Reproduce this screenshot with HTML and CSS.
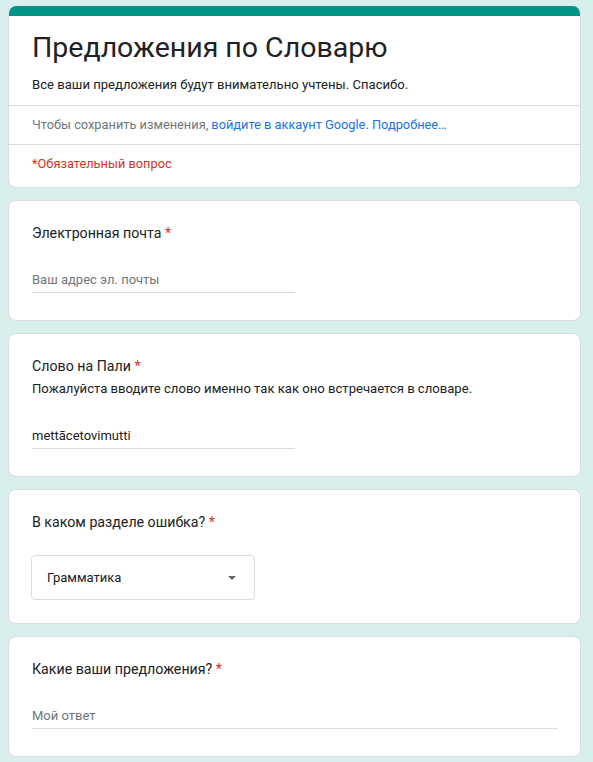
FILE: index.html
```html
<!DOCTYPE html>
<html lang="ru">
<head>
<meta charset="utf-8">
<title>Предложения по Словарю</title>
<link rel="stylesheet" href="styles.css">
</head>
<body>
<main class="form">
  <section class="card header-card">
    <div class="topbar"></div>
    <div class="header-main">
      <h1 class="title">Предложения по Словарю</h1>
      <p class="desc">Все ваши предложения будут внимательно учтены. Спасибо.</p>
    </div>
    <div class="info">Чтобы сохранить изменения, <a class="link" href="#">войдите в аккаунт Google.</a> <a class="link" href="#">Подробнее…</a></div>
    <div class="required-note">*Обязательный вопрос</div>
  </section>

  <section class="card question">
    <div class="q-title">Электронная почта <span class="star">*</span></div>
    <div class="input short"><span class="placeholder">Ваш адрес эл. почты</span></div>
  </section>

  <section class="card question">
    <div class="q-title">Слово на Пали <span class="star">*</span></div>
    <div class="q-help">Пожалуйста вводите слово именно так как оно встречается в словаре.</div>
    <div class="input short with-help"><span class="value">mettācetovimutti</span></div>
  </section>

  <section class="card question">
    <div class="q-title">В каком разделе ошибка? <span class="star">*</span></div>
    <div class="select">
      <span class="value">Грамматика</span>
      <svg class="arrow" width="8" height="4" viewBox="0 0 8 4"><path d="M0 0 L8 0 L4 4 Z" fill="#5f6368"/></svg>
    </div>
  </section>

  <section class="card question">
    <div class="q-title">Какие ваши предложения? <span class="star">*</span></div>
    <div class="input long"><span class="placeholder">Мой ответ</span></div>
  </section>
</main>
</body>
</html>
```

FILE: styles.css
```css
html, body {
  margin: 0;
  padding: 0;
}
body {
  background: #d9efed;
  font-family: Roboto, "Noto Sans", Arial, sans-serif;
  color: #202124;
}
.form {
  width: 573px;
  margin: 6px 0 0 8px;
  display: flex;
  flex-direction: column;
  gap: 12px;
}
.card {
  background: #fff;
  border: 1px solid #dadce0;
  border-radius: 8px;
  box-sizing: border-box;
}
.header-card {
  overflow: hidden;
  height: 182px;
  border-top: none;
}
.topbar {
  height: 10px;
  background: #009485;
}
.header-main {
  padding: 12px 23px 0;
  height: 90px;
  box-sizing: border-box;
  border-bottom: 1px solid #dadce0;
}
.title {
  margin: 0;
  font-size: 28.5px;
  font-weight: 400;
  line-height: 40px;
  color: #202124;
}
.desc {
  margin: 8px 0 0;
  font-size: 13.1px;
  line-height: 18px;
}
.info {
  height: 39px;
  box-sizing: border-box;
  border-bottom: 1px solid #dadce0;
  padding: 0 23px;
  font-size: 12.8px;
  line-height: 37px;
  color: #70757a;
}
.link {
  color: #1a73e8;
  text-decoration: none;
}
.required-note {
  padding: 0 23px;
  font-size: 12.8px;
  line-height: 37px;
  color: #d93025;
}
.question {
  padding: 22px 23px 0;
}
.q-title {
  font-size: 14.2px;
  line-height: 20px;
  color: #202124;
}
.star {
  color: #d93025;
}
.q-help {
  font-size: 13.1px;
  line-height: 18px;
  margin-top: 4px;
}
.input {
  margin: 26px 0 27px;
  height: 24px;
  box-sizing: border-box;
  border-bottom: 1px solid #dadce0;
  font-size: 13px;
  line-height: 22px;
}
.input.with-help {
  margin-top: 27px;
}
.input.short {
  width: 263px;
}
.input.long {
  width: 526px;
}
.placeholder {
  color: #70757a;
}
.value {
  color: #202124;
}
.select {
  margin: 23px 0 23px -1px;
  width: 224px;
  height: 45px;
  box-sizing: border-box;
  border: 1px solid #dadce0;
  border-radius: 4px;
  display: flex;
  align-items: center;
  justify-content: space-between;
  padding: 0 18px 0 15px;
  font-size: 13px;
}
.arrow {
  display: block;
}
```
